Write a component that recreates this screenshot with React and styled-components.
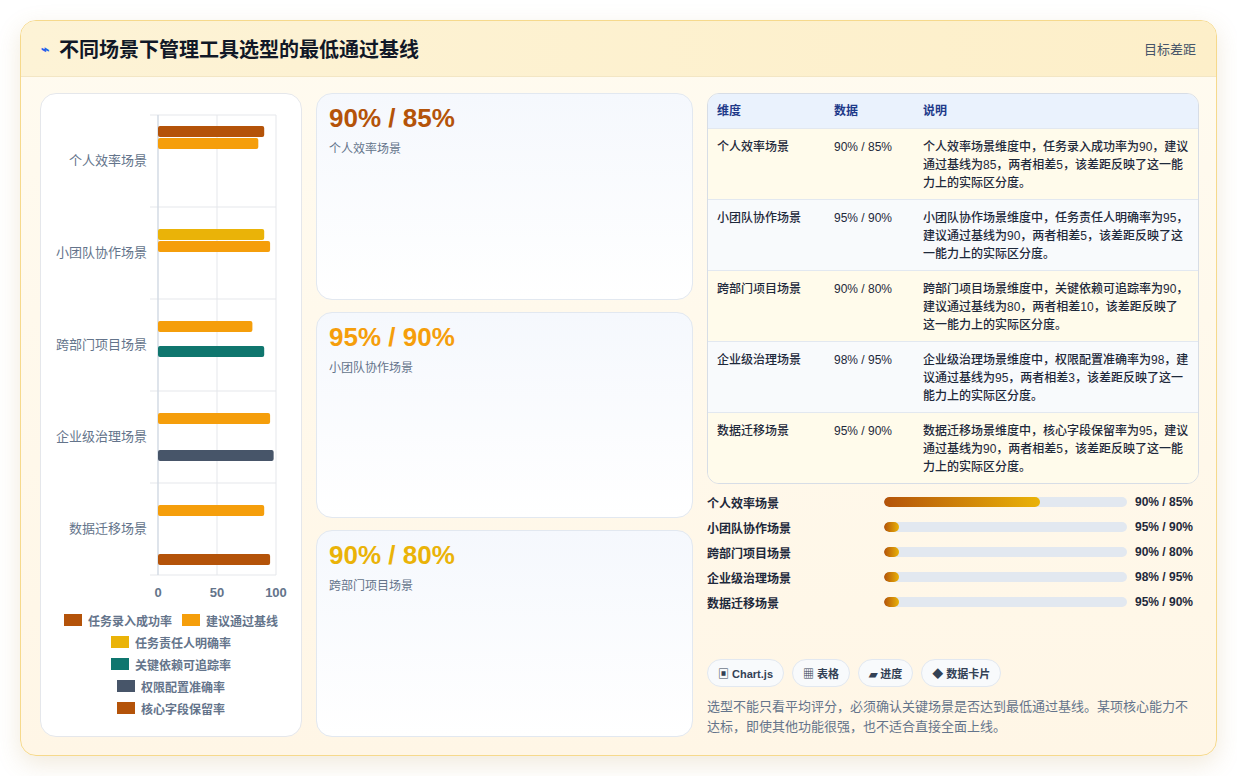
import React from "react";
import styled, { createGlobalStyle } from "styled-components";

const Global = createGlobalStyle`
  html,body{margin:0;padding:0;background:#fff;}
  body{font-family:"Liberation Sans","Noto Sans CJK SC",sans-serif;}
  *{box-sizing:border-box;}
`;
const Page = styled.div`padding:20px 20px 20px 20px;width:1237px;height:776px;`;
const Card = styled.div`
  width:1197px;height:736px;border:1px solid #f6d98c;border-radius:16px;
  background:linear-gradient(180deg,#fffbf0,#fff6e6);overflow:hidden;
  box-shadow:0 8px 24px rgba(180,140,60,.18);display:flex;flex-direction:column;
`;
const Header = styled.div`
  height:56px;display:flex;align-items:center;justify-content:space-between;
  padding:0 20px;background:linear-gradient(90deg,#fdf3d6,#fdefc9);border-bottom:1px solid #f3e6c4;
`;
const Title = styled.h1`margin:0;font-size:20px;font-weight:700;color:#111827;display:flex;align-items:center;gap:10px;`;
const Bolt = styled.span`color:#2563eb;font-size:14px;font-weight:700;`;
const HeadRight = styled.span`font-size:13px;color:#475569;`;
const Body = styled.div`flex:1;display:grid;grid-template-columns:262px 377px 492px;gap:14px;padding:16px 19px 18px 19px;`;
const ChartBox = styled.div`background:#fff;border:1px solid #e5e7eb;border-radius:16px;display:flex;flex-direction:column;align-items:center;`;
const Legend = styled.div`display:flex;flex-direction:column;align-items:center;gap:6px;margin-top:6px;font-size:12px;font-weight:700;color:#64748b;`;
const LegLine = styled.div`display:flex;gap:10px;`;
const LegItem = styled.div`display:flex;align-items:center;gap:6px;height:16px;`;
const Sw = styled.span`width:18px;height:12px;background:${p=>p.c};`;
const Col = styled.div`display:flex;flex-direction:column;gap:12px;`;
const Stat = styled.div`flex:1;border:1px solid #e2e8f0;border-radius:16px;background:linear-gradient(180deg,#f5f8fd,#fff);padding:9px 12px;`;
const Big = styled.div`font-size:26px;font-weight:700;color:${p=>p.c};`;
const Sub = styled.div`font-size:12px;color:#64748b;margin-top:5px;`;
const Right = styled.div`display:flex;flex-direction:column;`;
const Table = styled.div`border:1px solid #d7dde6;border-radius:12px;overflow:hidden;`;
const Row = styled.div`display:grid;grid-template-columns:117px 89px 1fr;padding:${p=>p.h?"8px 9px":"9px 9px 7px"};
  background:${p=>p.h?"#eaf2fd":p.alt?"#f8fafc":"#fffbeb"};border-bottom:${p=>p.last?"none":"1px solid #e2e8f0"};
  font-size:12px;line-height:18px;color:${p=>p.h?"#1e3a8a":"#1e293b"};font-weight:${p=>p.h?700:500};`;
const Bars = styled.div`display:flex;flex-direction:column;gap:7px;margin-top:9px;`;
const PRow = styled.div`display:grid;grid-template-columns:177px 243px 1fr;align-items:center;font-size:12px;font-weight:700;color:#1e293b;height:18px;`;
const Track = styled.div`height:10px;border-radius:5px;background:#e2e8f0;overflow:hidden;`;
const Fill = styled.div`height:100%;border-radius:5px;background:linear-gradient(90deg,#b45309,#eab308);`;
const Val = styled.span`padding-left:8px;`;
const Chips = styled.div`display:flex;gap:8px;margin-top:auto;`;
const Chip = styled.span`height:28px;padding:0 10px;border:1px solid #e2e8f0;border-radius:14px;background:#f8fafc;display:flex;align-items:center;font-size:11px;font-weight:700;color:#334155;`;
const Note = styled.p`margin:10px 0 0;font-size:13px;line-height:20px;color:#64748b;`;

const C = { brown:"#b45309", orange:"#f59e0b", yellow:"#eab308", teal:"#0f766e", slate:"#475569" };
const cats = ["个人效率场景","小团队协作场景","跨部门项目场景","企业级治理场景","数据迁移场景"];
const bars = [
  [[131,90,C.brown],[143,85,C.orange]],
  [[234,90,C.yellow],[246,95,C.orange]],
  [[326,80,C.orange],[351,90,C.teal]],
  [[418,95,C.orange],[455,98,C.slate]],
  [[510,90,C.orange],[559,95,C.brown]],
];
function Chart(){
  const x0=117, s=1.18, top=-94;
  return (
    <svg width="260" height="512" style={{display:"block"}}>
      {[0,50,100].map(v=><line key={v} x1={x0+v*s} x2={x0+v*s} y1={115+top} y2={575+top} stroke="#e5e7eb"/>)}
      {[115,207,299,391,483,575].map(y=><line key={y} x1={x0-8} x2={x0+118} y1={y+top} y2={y+top} stroke="#e5e7eb"/>)}
      <line x1={x0} x2={x0} y1={115+top} y2={575+top} stroke="#cbd5e1"/>
      {cats.map((c,i)=><text key={c} x={106} y={165+i*92+top} textAnchor="end" fontSize="13" fill="#64748b">{c}</text>)}
      {bars.flat().map(([y,v,col],i)=><rect key={i} x={x0} y={y-5+top} width={v*s} height={11} rx="2" fill={col}/>)}
      {[0,50,100].map(v=><text key={v} x={x0+v*s} y={597+top} textAnchor="middle" fontSize="13" fontWeight="700" fill="#64748b">{v}</text>)}
    </svg>
  );
}
const rows = [
  ["个人效率场景","90% / 85%","个人效率场景维度中，任务录入成功率为90，建议通过基线为85，两者相差5，该差距反映了这一能力上的实际区分度。"],
  ["小团队协作场景","95% / 90%","小团队协作场景维度中，任务责任人明确率为95，建议通过基线为90，两者相差5，该差距反映了这一能力上的实际区分度。"],
  ["跨部门项目场景","90% / 80%","跨部门项目场景维度中，关键依赖可追踪率为90，建议通过基线为80，两者相差10，该差距反映了这一能力上的实际区分度。"],
  ["企业级治理场景","98% / 95%","企业级治理场景维度中，权限配置准确率为98，建议通过基线为95，两者相差3，该差距反映了这一能力上的实际区分度。"],
  ["数据迁移场景","95% / 90%","数据迁移场景维度中，核心字段保留率为95，建议通过基线为90，两者相差5，该差距反映了这一能力上的实际区分度。"],
];
export default function App(){
  return (<Page><Global/><Card>
    <Header><Title><Bolt>⌁</Bolt>不同场景下管理工具选型的最低通过基线</Title><HeadRight>目标差距</HeadRight></Header>
    <Body>
      <ChartBox>
        <Chart/>
        <Legend>
          <LegLine><LegItem><Sw c={C.brown}/>任务录入成功率</LegItem><LegItem><Sw c={C.orange}/>建议通过基线</LegItem></LegLine>
          <LegItem><Sw c={C.yellow}/>任务责任人明确率</LegItem>
          <LegItem><Sw c={C.teal}/>关键依赖可追踪率</LegItem>
          <LegItem><Sw c={C.slate}/>权限配置准确率</LegItem>
          <LegItem><Sw c={C.brown}/>核心字段保留率</LegItem>
        </Legend>
      </ChartBox>
      <Col>
        <Stat><Big c="#b45309">90% / 85%</Big><Sub>个人效率场景</Sub></Stat>
        <Stat><Big c="#f59e0b">95% / 90%</Big><Sub>小团队协作场景</Sub></Stat>
        <Stat><Big c="#eab308">90% / 80%</Big><Sub>跨部门项目场景</Sub></Stat>
      </Col>
      <Right>
        <Table>
          <Row h><span>维度</span><span>数据</span><span>说明</span></Row>
          {rows.map((r,i)=><Row key={i} alt={i%2===1} last={i===4}><span>{r[0]}</span><span>{r[1]}</span><span>{r[2]}</span></Row>)}
        </Table>
        <Bars>
          {rows.map((r,i)=><PRow key={i}><span>{r[0]}</span><Track><Fill style={{width:i===0?"64%":"6%"}}/></Track><Val>{r[1]}</Val></PRow>)}
        </Bars>
        <Chips><Chip>▣ Chart.js</Chip><Chip>▦ 表格</Chip><Chip>▰ 进度</Chip><Chip>◆ 数据卡片</Chip></Chips>
        <Note>选型不能只看平均评分，必须确认关键场景是否达到最低通过基线。某项核心能力不达标，即使其他功能很强，也不适合直接全面上线。</Note>
      </Right>
    </Body>
  </Card></Page>);
}
